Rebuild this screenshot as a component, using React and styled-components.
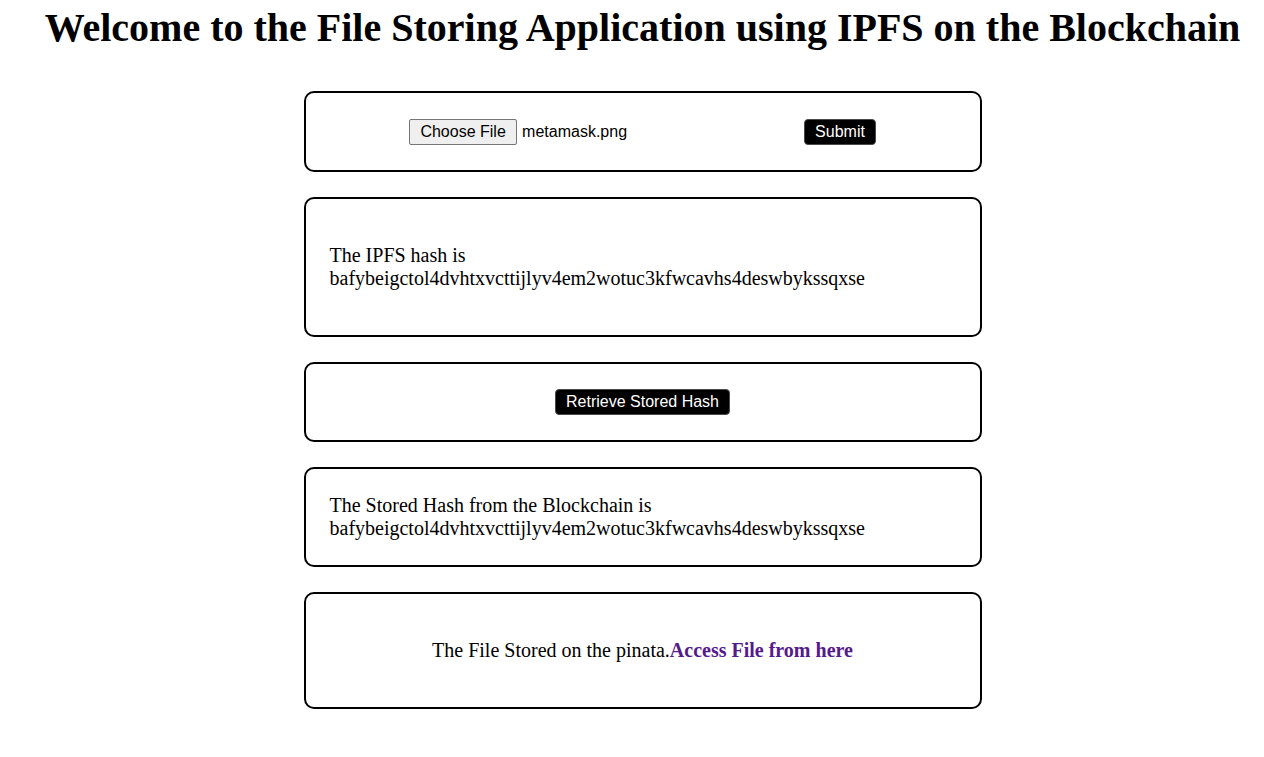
import React from "react";
import styled, { createGlobalStyle } from "styled-components";

const GlobalStyle = createGlobalStyle`
  body {
    margin: 0;
    background: #fff;
    font-family: "Liberation Serif", "Times New Roman", serif;
    color: #000;
  }
`;

export default function App() {
    const hash = "bafybeigctol4dvhtxvcttijlyv4em2wotuc3kfwcavhs4deswbykssqxse";

    return (
        <>
            <GlobalStyle />
            <Page>
                <Title>Welcome to the File Storing Application using IPFS on the Blockchain</Title>
                <Stack>
                    <Card>
                        <UploadRow>
                            <FileField>
                                <ChooseButton type="button">Choose File</ChooseButton>
                                <FileName>metamask.png</FileName>
                            </FileField>
                            <DarkButton type="button">Submit</DarkButton>
                        </UploadRow>
                    </Card>

                    <Card>
                        <Text>
                            The IPFS hash is
                            <br />
                            {hash}
                        </Text>
                    </Card>

                    <Card>
                        <Centered>
                            <DarkButton type="button">Retrieve Stored Hash</DarkButton>
                        </Centered>
                    </Card>

                    <Card>
                        <Plain>
                            The Stored Hash from the Blockchain is
                            <br />
                            {hash}
                        </Plain>
                    </Card>

                    <Card>
                        <Text $center>
                            The File Stored on the pinata.
                            <FileLink href="#">Access File from here</FileLink>
                        </Text>
                    </Card>
                </Stack>
            </Page>
        </>
    );
}

const Page = styled.div`
  padding: 5px 0 40px 21px;
`;

const Title = styled.h1`
  margin: 0;
  font-size: 40px;
  font-weight: bold;
  text-align: center;
  line-height: 46px;
`;

const Stack = styled.div`
  display: flex;
  flex-direction: column;
  align-items: center;
  gap: 25px;
  margin-top: 40px;
`;

const Card = styled.div`
  width: 678px;
  box-sizing: border-box;
  border: 2px solid #000;
  border-radius: 10px;
  padding: 25px 24px;
`;

const UploadRow = styled.div`
  display: flex;
  justify-content: center;
  align-items: center;
  min-height: 27px;
`;

const FileField = styled.div`
  display: flex;
  align-items: center;
  width: 395px;
  font-family: "Liberation Sans", Arial, sans-serif;
  font-size: 16px;
`;

const ChooseButton = styled.button`
  font-family: "Liberation Sans", Arial, sans-serif;
  font-size: 16px;
  height: 26px;
  width: 108px;
  padding: 0;
  background: #efefef;
  color: #000;
  border: 1px solid #767676;
  border-radius: 2px;
`;

const FileName = styled.span`
  margin-left: 5px;
`;

const DarkButton = styled.button`
  font-family: "Liberation Sans", Arial, sans-serif;
  font-size: 16px;
  height: 26px;
  padding: 0 10px;
  background: #000;
  color: #fff;
  border: 1px solid #4a4a4a;
  border-radius: 4px;
`;

const Text = styled.p`
  margin: 20px 0;
  font-size: 20px;
  line-height: 23px;
  text-align: ${(p) => (p.$center ? "center" : "left")};
`;

const Plain = styled.div`
  font-size: 20px;
  line-height: 23px;
`;

const Centered = styled.div`
  display: flex;
  justify-content: center;
`;

const FileLink = styled.a`
  color: #551a8b;
  font-weight: bold;
  text-decoration: none;
`;
